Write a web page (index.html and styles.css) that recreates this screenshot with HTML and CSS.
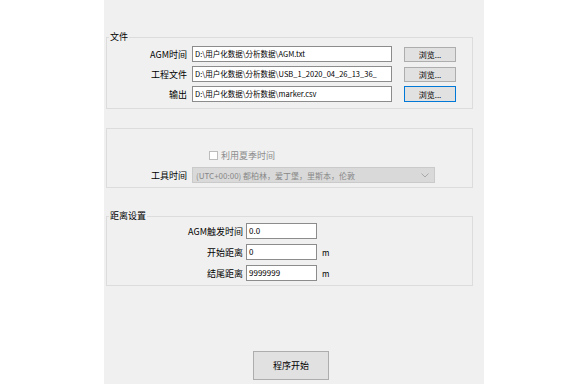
FILE: index.html
```html
<!DOCTYPE html>
<html lang="zh">
<head>
<meta charset="utf-8">
<link rel="stylesheet" href="styles.css">
</head>
<body>
<div class="panel">
  <fieldset class="group files">
    <legend>文件</legend>
    <div class="frow">
      <span class="lbl">AGM时间</span>
      <span class="path">D:\用户化数据\分析数据\AGM.txt</span>
      <button class="browse">浏览...</button>
    </div>
    <div class="frow">
      <span class="lbl">工程文件</span>
      <span class="path">D:\用户化数据\分析数据\USB_1_2020_04_26_13_36_</span>
      <button class="browse">浏览...</button>
    </div>
    <div class="frow">
      <span class="lbl">输出</span>
      <span class="path">D:\用户化数据\分析数据\marker.csv</span>
      <button class="browse focus">浏览...</button>
    </div>
  </fieldset>

  <div class="group tz">
    <div class="chkrow">
      <span class="chk"></span>
      <span class="chklbl">利用夏季时间</span>
    </div>
    <div class="frow">
      <span class="lbl">工具时间</span>
      <span class="combo">
        <span class="combotext">(UTC+00:00) 都柏林，爱丁堡，里斯本，伦敦</span>
        <svg class="chev" width="8" height="5" viewBox="0 0 8 5"><path d="M0.5 0.5 L4 4 L7.5 0.5" fill="none" stroke="#a8a8a8" stroke-width="1"/></svg>
      </span>
    </div>
  </div>

  <fieldset class="group dist">
    <legend>距离设置</legend>
    <div class="drow">
      <span class="dlbl">AGM触发时间</span>
      <span class="num">0.0</span>
    </div>
    <div class="drow">
      <span class="dlbl">开始距离</span>
      <span class="num">0</span>
      <span class="unit">m</span>
    </div>
    <div class="drow">
      <span class="dlbl">结尾距离</span>
      <span class="num">9999999</span>
      <span class="unit">m</span>
    </div>
  </fieldset>

  <button class="start">程序开始</button>
</div>
</body>
</html>
```
FILE: styles.css
```css
html, body {
  margin: 0;
  padding: 0;
  background: #ffffff;
}
body {
  font-family: "Noto Sans CJK SC", "Noto Sans", sans-serif;
  font-size: 9px;
  color: #000;
}
.panel {
  margin-left: 104px;
  width: 380px;
  height: 384px;
  background: #f0f0f0;
  display: flex;
  flex-direction: column;
  box-sizing: border-box;
  padding-top: 31px;
}
.group {
  margin: 0 0 0 2px;
  width: 367px;
  box-sizing: border-box;
  border: 1px solid #dcdcdc;
  padding: 0;
  min-width: 0;
}
legend {
  padding: 0 1px;
  margin-left: 2px;
  line-height: 12px;
  height: 12px;
  font-size: 9px;
}
.files {
  padding: 3px 0 6px 0;
  display: flex;
  flex-direction: column;
  gap: 4px;
}
.frow {
  display: flex;
  align-items: center;
  height: 16px;
}
.lbl {
  width: 80px;
  text-align: right;
  margin-right: 5px;
  white-space: nowrap;
}
.path {
  width: 200px;
  height: 16px;
  box-sizing: border-box;
  border: 1px solid #8c8c8c;
  background: #fff;
  padding: 0 2px;
  line-height: 14px;
  overflow: hidden;
  white-space: nowrap;
  font-size: 7.5px;
}
.browse {
  margin-left: 12px;
  width: 52px;
  height: 15px;
  box-sizing: border-box;
  border: 1px solid #adadad;
  background: #e1e1e1;
  font-family: inherit;
  font-size: 8px;
  padding: 0;
  line-height: 13px;
  color: #000;
}
.browse.focus {
  border-color: #0078d7;
  height: 16px;
}
.tz {
  margin-top: 19px;
  padding: 20px 0 4px 0;
  display: flex;
  flex-direction: column;
  gap: 6px;
}
.chkrow {
  display: flex;
  align-items: center;
  height: 12px;
  margin-left: 102px;
}
.chk {
  width: 7px;
  height: 7px;
  border: 1px solid #bcbcbc;
  background: #fff;
  margin-right: 3px;
}
.chklbl {
  color: #8d8d8d;
}
.combo {
  width: 243px;
  height: 16px;
  box-sizing: border-box;
  border: 1px solid #cacaca;
  background: #d9d9d9;
  display: flex;
  align-items: center;
  justify-content: space-between;
  padding: 0 5px 0 3px;
  color: #888;
  font-size: 8px;
}
.chev {
  display: block;
}
.dist {
  margin-top: 22px;
  padding: 1px 0 4px 0;
  display: flex;
  flex-direction: column;
  gap: 5px;
}
.drow {
  display: flex;
  align-items: center;
  height: 16px;
}
.dlbl {
  width: 136px;
  text-align: right;
  margin-right: 3px;
  white-space: nowrap;
}
.num {
  width: 71px;
  height: 16px;
  box-sizing: border-box;
  border: 1px solid #8c8c8c;
  background: #fff;
  padding: 0 2px;
  line-height: 14px;
  font-size: 8px;
}
.unit {
  margin-left: 5px;
  font-size: 8px;
}
.start {
  margin: 65px 0 0 149px;
  width: 76px;
  height: 29px;
  box-sizing: border-box;
  border: 1px solid #adadad;
  background: #e1e1e1;
  font-family: inherit;
  font-size: 9px;
  color: #000;
  padding: 0;
}
```
